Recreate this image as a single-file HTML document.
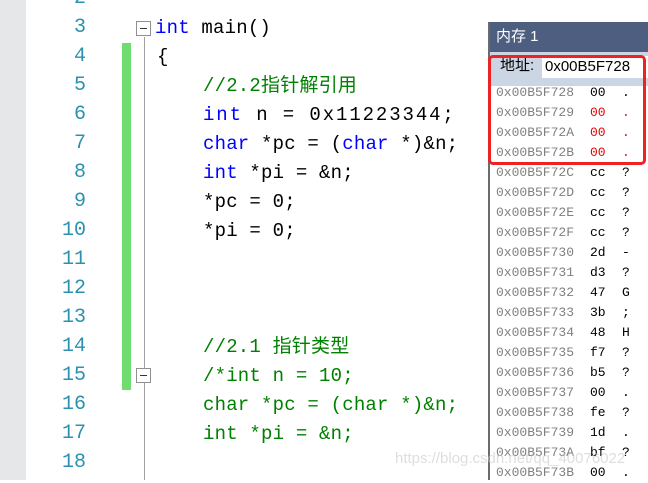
<!DOCTYPE html>
<html><head><meta charset="utf-8"><style>
body{margin:0;width:648px;height:480px;overflow:hidden;background:#fff;position:relative;font-family:"Liberation Mono","Noto Sans CJK SC",monospace}
.strip{position:absolute;left:0;top:0;width:26px;height:480px;background:#e6e7e8}
.ln{position:absolute;left:40px;width:46px;text-align:right;color:#2b91af;font-size:20px;line-height:29px}
.code{position:absolute;font-size:19px;letter-spacing:0.2px;line-height:29px;white-space:pre;color:#000}
.k{color:#0000ff}.c{color:#008000}
.mem{position:absolute;left:488px;top:22px;width:160px;height:458px;background:#fff;border-left:2px solid #6b6b6b}
.title{height:30px;background:#4d5e80;color:#fff;font-family:"Liberation Sans","Noto Sans CJK SC",sans-serif;font-size:15px;line-height:30px;padding-left:6px}
.bar{height:28px;background:#ccd5e4;position:relative;font-family:"Liberation Sans","Noto Sans CJK SC",sans-serif;font-size:15px}
.row{position:absolute;left:6px;height:20px;line-height:20px;font-size:13px;white-space:pre;color:#808080}
.row b{font-weight:normal;color:#000;position:absolute;left:94px}
.row i{font-style:normal;color:#000;position:absolute;left:126px}
.red b,.red i{color:#e00}
</style></head><body>
<div class="strip"></div>
<div class="ln" style="top:-16px">2</div>
<div class="ln" style="top:13px">3</div>
<div class="ln" style="top:42px">4</div>
<div class="ln" style="top:71px">5</div>
<div class="ln" style="top:100px">6</div>
<div class="ln" style="top:129px">7</div>
<div class="ln" style="top:158px">8</div>
<div class="ln" style="top:187px">9</div>
<div class="ln" style="top:216px">10</div>
<div class="ln" style="top:245px">11</div>
<div class="ln" style="top:274px">12</div>
<div class="ln" style="top:303px">13</div>
<div class="ln" style="top:332px">14</div>
<div class="ln" style="top:361px">15</div>
<div class="ln" style="top:390px">16</div>
<div class="ln" style="top:419px">17</div>
<div class="ln" style="top:448px">18</div>
<div style="position:absolute;left:122px;top:43px;width:9px;height:347px;background:#6edc6e"></div>
<div style="position:absolute;left:144px;top:37px;width:1px;height:443px;background:#a0a0a0"></div>
<div style="position:absolute;left:136px;top:21px;width:13px;height:13px;border:1px solid #909090;background:#fff"><div style="position:absolute;left:3px;top:6px;width:7px;height:1px;background:#333"></div></div>
<div style="position:absolute;left:136px;top:368px;width:13px;height:13px;border:1px solid #909090;background:#fff"><div style="position:absolute;left:3px;top:6px;width:7px;height:1px;background:#333"></div></div>
<div class="code" style="left:155px;top:14px"><span class="k">int</span> main()</div>
<div class="code" style="left:157px;top:43px">{</div>
<div class="code c" style="left:203px;top:72px">//2.2指针解引用</div>
<div class="code" style="left:203px;top:101px;letter-spacing:1.9px"><span class="k">int</span> n = 0x11223344;</div>
<div class="code" style="left:203px;top:130px"><span class="k">char</span> *pc = (<span class="k">char</span> *)&amp;n;</div>
<div class="code" style="left:203px;top:159px"><span class="k">int</span> *pi = &amp;n;</div>
<div class="code" style="left:203px;top:188px">*pc = 0;</div>
<div class="code" style="left:203px;top:217px">*pi = 0;</div>
<div class="code c" style="left:203px;top:333px">//2.1 指针类型</div>
<div class="code c" style="left:203px;top:362px">/*int n = 10;</div>
<div class="code c" style="left:203px;top:391px">char *pc = (char *)&amp;n;</div>
<div class="code c" style="left:203px;top:420px">int *pi = &amp;n;</div>
<div class="mem">
<div class="title">内存 1</div>
<div class="bar"><span style="position:absolute;left:10px;top:5px;line-height:18px">地址:</span><div style="position:absolute;left:52px;top:4px;width:108px;height:22px;background:#fff;line-height:22px;padding-left:3px;font-size:15px">0x00B5F728</div></div>
<div style="height:6px;background:#ccd5e4"></div>
<div class="row" style="top:61px">0x00B5F728<b>00</b><i>.</i></div>
<div class="row red" style="top:81px">0x00B5F729<b>00</b><i>.</i></div>
<div class="row red" style="top:101px">0x00B5F72A<b>00</b><i>.</i></div>
<div class="row red" style="top:121px">0x00B5F72B<b>00</b><i>.</i></div>
<div class="row" style="top:141px">0x00B5F72C<b>cc</b><i>?</i></div>
<div class="row" style="top:161px">0x00B5F72D<b>cc</b><i>?</i></div>
<div class="row" style="top:181px">0x00B5F72E<b>cc</b><i>?</i></div>
<div class="row" style="top:201px">0x00B5F72F<b>cc</b><i>?</i></div>
<div class="row" style="top:221px">0x00B5F730<b>2d</b><i>-</i></div>
<div class="row" style="top:241px">0x00B5F731<b>d3</b><i>?</i></div>
<div class="row" style="top:261px">0x00B5F732<b>47</b><i>G</i></div>
<div class="row" style="top:281px">0x00B5F733<b>3b</b><i>;</i></div>
<div class="row" style="top:301px">0x00B5F734<b>48</b><i>H</i></div>
<div class="row" style="top:321px">0x00B5F735<b>f7</b><i>?</i></div>
<div class="row" style="top:341px">0x00B5F736<b>b5</b><i>?</i></div>
<div class="row" style="top:361px">0x00B5F737<b>00</b><i>.</i></div>
<div class="row" style="top:381px">0x00B5F738<b>fe</b><i>?</i></div>
<div class="row" style="top:401px">0x00B5F739<b>1d</b><i>.</i></div>
<div class="row" style="top:421px">0x00B5F73A<b>bf</b><i>?</i></div>
<div class="row" style="top:441px">0x00B5F73B<b>00</b><i>.</i></div>
</div>
<div style="position:absolute;left:488px;top:55px;width:152px;height:104px;border:3px solid #ee2222;border-radius:5px"></div>
<div style="position:absolute;left:395px;top:450px;font-family:'Liberation Sans',sans-serif;font-size:15px;color:rgba(200,200,200,0.6)">https://blog.csdn.net/qq_40076022</div>
</body></html>
